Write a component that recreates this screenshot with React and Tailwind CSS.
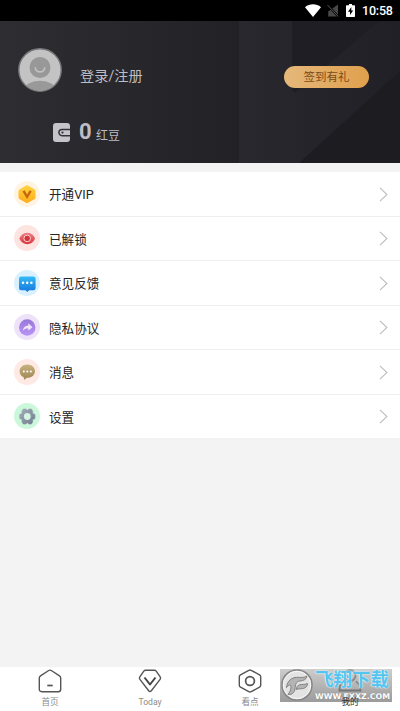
import React from "react";

const VipIcon = () => (
  <svg className="w-[26px] h-[26px]" viewBox="0 0 26 26">
    <defs>
      <linearGradient id="vip" x1="0" y1="0" x2="0" y2="1">
        <stop offset="0" stopColor="#ffd23f" />
        <stop offset="1" stopColor="#ffae1b" />
      </linearGradient>
    </defs>
    <circle cx="13" cy="13" r="13" fill="#fff4e3" />
    <path
      d="M13 5.200l6.800 3.800q.7.4.7 1.200v6q0 .8-.7 1.200L13 21.200l-6.800-3.800q-.7-.4-.7-1.200v-6q0-.8.7-1.200z"
      fill="url(#vip)"
      stroke="url(#vip)"
      strokeWidth="2"
      strokeLinejoin="round"
    />
    <path
      d="M9.500 9.800l3.600 6 3.600-6"
      fill="none"
      stroke="#c5660f"
      strokeWidth="2.300"
    />
  </svg>
);

const EyeIcon = () => (
  <svg className="w-[26px] h-[26px]" viewBox="0 0 26 26">
    <defs>
      <linearGradient id="eye" x1="0" y1="0" x2="0" y2="1">
        <stop offset="0" stopColor="#ee7f84" />
        <stop offset="1" stopColor="#d9343c" />
      </linearGradient>
    </defs>
    <circle cx="13" cy="13" r="13" fill="#fde4e0" />
    <path
      d="M5.300 13.600C7 9.700 10 7.800 13.300 7.800s6.200 1.900 7.800 5.800c-1.600 3.800-4.500 5.600-7.800 5.600s-6.400-1.800-8-5.600z"
      fill="url(#eye)"
    />
    <circle cx="13.200" cy="13.400" r="3.300" fill="#d4343b" stroke="#f9d3d1" strokeWidth="1" />
  </svg>
);

const FeedbackIcon = () => (
  <svg className="w-[26px] h-[26px]" viewBox="0 0 26 26">
    <defs>
      <linearGradient id="feedback" x1="0" y1="0" x2="0" y2="1">
        <stop offset="0" stopColor="#35baf5" />
        <stop offset="1" stopColor="#1677e0" />
      </linearGradient>
    </defs>
    <circle cx="13" cy="13" r="13" fill="#d9f1ff" />
    <path
      d="M7.200 6.500h12.200q2.200 0 2.200 2.200v9.300q0 2.200-2.200 2.200h-4.200l-1.900 1.700-1.900-1.700H7.200Q5 20.200 5 18V8.700q0-2.200 2.200-2.200z"
      fill="url(#feedback)"
    />
    <circle cx="9" cy="12.800" r="1.250" fill="#fff" />
    <circle cx="13.200" cy="12.800" r="1.250" fill="#fff" />
    <circle cx="17.400" cy="12.800" r="1.250" fill="#fff" />
  </svg>
);

const ShareIcon = () => (
  <svg className="w-[26px] h-[26px]" viewBox="0 0 26 26">
    <defs>
      <linearGradient id="share" x1="0" y1="0" x2="0" y2="1">
        <stop offset="0" stopColor="#9876d8" />
        <stop offset="1" stopColor="#b894f5" />
      </linearGradient>
    </defs>
    <circle cx="13" cy="13" r="13" fill="#eee2f9" />
    <circle cx="13.200" cy="13.500" r="8.200" fill="url(#share)" />
    <path
      d="M14.300 9.300l4.200 3.900-4.200 3.600v-2.200c-2.500-.1-3.900.4-5.500 2.200.4-3.200 2.100-5 5.500-5.300z"
      fill="#f0e4fc"
    />
  </svg>
);

const MessageIcon = () => (
  <svg className="w-[26px] h-[26px]" viewBox="0 0 26 26">
    <defs>
      <linearGradient id="message" x1="0" y1="0" x2="0" y2="1">
        <stop offset="0" stopColor="#c9b27f" />
        <stop offset="1" stopColor="#9d8555" />
      </linearGradient>
    </defs>
    <circle cx="13" cy="13" r="13" fill="#ffe9e5" />
    <path
      d="M13.300 5.600c4.300 0 7.700 2.900 7.700 6.600s-3.400 6.600-7.500 6.600c-1 .1-2 1.500-3.600 1.900.2-1 .1-1.900-.4-2.600-2.400-1.100-3.900-3.300-3.900-5.900 0-3.700 3.400-6.600 7.700-6.600z"
      fill="url(#message)"
    />
    <circle cx="9.800" cy="12.500" r="1.050" fill="#fff" />
    <circle cx="13.300" cy="12.500" r="1.050" fill="#fff" />
    <circle cx="16.800" cy="12.500" r="1.050" fill="#fff" />
  </svg>
);

const SettingsIcon = () => (
  <svg className="w-[26px] h-[26px]" viewBox="0 0 26 26">
    <defs>
      <linearGradient id="gear" x1="0" y1="0" x2="1" y2="1">
        <stop offset="0" stopColor="#a3adba" />
        <stop offset="1" stopColor="#717c8e" />
      </linearGradient>
    </defs>
    <circle cx="13" cy="13" r="13" fill="#cbf8da" />
    <path
      d="M9.200 6h2.500l1.600 1.300L14.900 6h2.500l1.300 2.300-.2 2.100 2.400 1v4.200l-2.400 1 .2 2.100-1.300 2.300h-2.500l-1.600-1.300L11.700 21H9.200l-1.300-2.300.2-2.100-2.400-1v-4.200l2.400-1-.2-2.100z"
      fill="url(#gear)"
      stroke="url(#gear)"
      strokeWidth=".6"
      strokeLinejoin="round"
    />
    <circle cx="13.300" cy="13.500" r="3.400" fill="#d5f5e3" />
  </svg>
);

const menuItems = [
  { label: "开通VIP", icon: VipIcon },
  { label: "已解锁", icon: EyeIcon },
  { label: "意见反馈", icon: FeedbackIcon },
  { label: "隐私协议", icon: ShareIcon },
  { label: "消息", icon: MessageIcon },
  { label: "设置", icon: SettingsIcon },
];

const StatusBar = () => (
  <div className="h-[21px] bg-black flex items-center justify-end pr-[7px] text-white">
    <svg className="w-4 h-[13px]" viewBox="0 0 16 13">
      <path d="M0 3.200C4.600-.6 11.400-.6 16 3.200L8 13z" fill="#fff" />
    </svg>
    <svg className="ml-[6px] w-3 h-[13px]" viewBox="0 0 12 13">
      <path d="M11 .5v12H1.200V7.500z" fill="#484848" />
      <path d="M.5 1l10.800 11.500" stroke="#000" strokeWidth="2.200" />
      <path d="M.5 1l10.800 11.500" stroke="#585858" strokeWidth="1" />
    </svg>
    <svg className="ml-[7px] w-[9px] h-[13px]" viewBox="0 0 9 13">
      <path d="M3 0h3v1.300h2.300q.7 0 .7.700v10.300q0 .7-.7.700H.7q-.7 0-.7-.7V2q0-.7.700-.7H3z" fill="#fff" />
      <path d="M5.300 3L2 7.700h2V11l3.200-4.600H5.300z" fill="#000" />
    </svg>
    <span className="ml-[7px] w-[31px] text-[12.500px] leading-[21px] font-medium tracking-[-0.2px] whitespace-nowrap">
      10:58
    </span>
  </div>
);

const Header = () => (
  <div className="relative h-[142px] bg-[#28272c]">
    <svg className="absolute inset-0 w-full h-full" viewBox="0 0 400 142" preserveAspectRatio="none">
      <defs>
        <linearGradient id="panel" x1="0" y1="0" x2="1" y2="0">
          <stop offset="0" stopColor="#2e2d32" />
          <stop offset="1" stopColor="#222126" />
        </linearGradient>
        <linearGradient id="fold" x1="0" y1="0" x2="1" y2="0">
          <stop offset="0" stopColor="#29282e" />
          <stop offset="1" stopColor="#212026" />
        </linearGradient>
      </defs>
      <rect width="240" height="142" fill="url(#panel)" />
      <rect x="239" width="161" height="142" fill="url(#fold)" />
      <path d="M292 0h87L295 72l-3-3z" fill="#1f1e24" />
      <path d="M400 50v92H299z" fill="#1d1c21" />
    </svg>

    <div className="relative flex items-start">
      <svg className="ml-[18px] mt-[27px] w-11 h-11" viewBox="0 0 44 44">
        <defs>
          <clipPath id="avatar">
            <circle cx="22" cy="22" r="20.500" />
          </clipPath>
        </defs>
        <circle cx="22" cy="22" r="21.200" fill="#c3c3c3" stroke="#77777a" strokeWidth="1.400" />
        <ellipse cx="22" cy="42" rx="16" ry="9.300" fill="#999" clipPath="url(#avatar)" />
        <circle cx="22" cy="19.500" r="10.500" fill="#989898" />
        <path d="M17.300 19.800c.8 5.400 8.600 5.400 9.400 0" fill="none" stroke="#c3c3c3" strokeWidth="1.500" strokeLinecap="round" />
      </svg>
      <span className="ml-[18px] mt-[45px] text-[14.200px] leading-5 text-[#bebdc4]">登录/注册</span>
      <button className="ml-auto mr-[31px] mt-[45px] w-[85px] h-[22px] rounded-full bg-gradient-to-r from-[#e5b87a] to-[#e0a04c] text-[11.500px] leading-[23px] text-[#7b4b16]">
        签到有礼
      </button>
    </div>

    <div className="relative flex items-center h-6 mt-7 ml-[53px] text-[#bebdc4]">
      <svg className="w-[17px] h-[19px]" viewBox="0 0 17 19">
        <path d="M3 0h11q3 0 3 3v13q0 3-3 3H3q-3 0-3-3V3q0-3 3-3z" fill="#c5c4cb" />
        <path d="M17 6.500H9a3.100 3.100 0 000 6.200h8" fill="#c5c4cb" stroke="#333238" strokeWidth="1.500" />
        <circle cx="9.500" cy="9.600" r="1.100" fill="#333238" />
      </svg>
      <span className="ml-[9px] w-[13px] text-[22px] leading-6 font-bold">0</span>
      <span className="ml-[4px] mt-[8px] text-[12px] leading-[18px]">红豆</span>
    </div>
  </div>
);

const MenuRow = ({ item }) => {
  const Icon = item.icon;
  return (
    <div className="flex-1 flex items-center pl-[14px] pr-3 border-b border-[#efefef] last:border-b-0">
      <Icon />
      <span className="ml-[9px] pt-[3px] text-[12.600px] leading-5 text-[#262626]">{item.label}</span>
      <svg className="ml-auto mt-px w-[9px] h-[15px]" viewBox="0 0 9 15">
        <path d="M1 .8l6.900 6.700L1 14.200" fill="none" stroke="#bdbdbd" strokeWidth="1.100" />
      </svg>
    </div>
  );
};

const HomeIcon = () => (
  <svg className="w-6 h-6" viewBox="0 0 24 24" fill="none" stroke="#555" strokeWidth="1.400" strokeLinejoin="round">
    <path d="M10.700 1.500q1.300-.8 2.600 0l8.200 5.300q1.200.8 1.200 2.200v11.200q0 2.500-2.500 2.500H3.800q-2.500 0-2.500-2.500V9q0-1.400 1.200-2.200z" />
    <path d="M9.300 16.500h5.400" strokeWidth="1.700" />
  </svg>
);

const TodayIcon = () => (
  <svg className="w-6 h-6" viewBox="0 0 24 24" fill="none" stroke="#555" strokeWidth="1.400" strokeLinejoin="round">
    <path d="M7.500 1.200h9q1 0 1.700.9l4 5.700q.9 1.300-.1 2.600L13.300 21.700q-1.300 1.600-2.600 0L1.900 10.400q-1-1.300-.1-2.600l4-5.700q.7-.9 1.700-.9z" />
    <path d="M6.500 8.500l5.500 7 5.500-7" stroke="#444" strokeWidth="2" />
  </svg>
);

const WatchIcon = () => (
  <svg className="w-6 h-6" viewBox="0 0 24 24" fill="none" stroke="#555" strokeWidth="1.400" strokeLinejoin="round">
    <path d="M10.800 1.300q1.200-.7 2.400 0l8.300 4.500q1.200.7 1.200 2v8.400q0 1.300-1.200 2l-8.300 4.500q-1.200.7-2.400 0l-8.300-4.500q-1.200-.7-1.200-2V7.800q0-1.300 1.200-2z" />
    <circle cx="12" cy="12" r="4.400" strokeWidth="1.700" />
  </svg>
);

const MineIcon = () => (
  <svg className="w-6 h-6" viewBox="0 0 24 24" fill="none" stroke="#20242e" strokeWidth="1.800">
    <circle cx="12" cy="6.500" r="5.500" />
    <path d="M6 12.500Q1.500 15 1.500 21.500h21Q22.500 15 18 12.500" />
  </svg>
);

const tabs = [
  { label: "首页", icon: HomeIcon },
  { label: "Today", icon: TodayIcon },
  { label: "看点", icon: WatchIcon },
  { label: "我的", icon: MineIcon, active: true },
];

const Watermark = () => (
  <div className="absolute left-[280px] top-[2px] w-28 h-[33px] flex items-start bg-gradient-to-b from-[#bdbdbd]/75 to-[#7a7a7a]/75">
    <svg className="ml-px w-8 h-8 shrink-0" viewBox="0 0 32 32">
      <circle cx="16" cy="16" r="15" fill="#e3e3e3" stroke="#858585" strokeWidth="1.500" />
      <circle cx="16" cy="16" r="13.700" fill="none" stroke="#f8f8f8" strokeWidth="1" />
      <path
        d="M26 7c-4 2.500-8 .8-12 1.500C8.500 9.500 6 14 5.500 18.500c3-3.500 4.500-3 4.500-.5 0 3-1.500 5.500-3 7.500 4 .5 6.500-2 7-5.500.4-4.500 1-7.500 5-8 3.500-.3 6.500-1.500 7-5z"
        fill="#b4b4b4"
        stroke="#7b7b7b"
        strokeWidth=".9"
      />
      <path
        d="M26.500 14.500c-3 1.500-5.500.5-8 1.300-2.200.7-3 2.500-3.200 4.700 2.500-1.200 4.500-.4 7-1 2.700-.7 4.200-2.500 4.200-5z"
        fill="#b4b4b4"
        stroke="#7b7b7b"
        strokeWidth=".9"
      />
    </svg>
    <div className="ml-[2px] flex flex-col whitespace-nowrap">
      <span className="text-[18.500px] leading-[23px] h-[23px] font-bold text-[#54c5f0] [text-shadow:0_0_1px_#fff,0_0_2px_#e8f8ff]">
        飞翔下载
      </span>
      <span className="h-[9px] text-[7.900px] leading-[9px] font-bold text-white font-['DejaVu_Sans',sans-serif] [text-shadow:0_0_1px_#777]">
        WWW.FXXZ.COM
      </span>
    </div>
  </div>
);

const TabBar = () => (
  <div className="relative h-11 bg-white grid grid-cols-4">
    {tabs.map((tab) => {
      const Icon = tab.icon;
      return (
        <div key={tab.label} className="flex flex-col items-center pt-[2px]">
          <Icon />
          <span
            className={`mt-[3px] text-[8.600px] leading-3 ${
              tab.active ? "relative z-10 text-[#333]" : "text-[#8a8a8a]"
            }`}
          >
            {tab.label}
          </span>
        </div>
      );
    })}
    <Watermark />
  </div>
);

export default function App() {
  return (
    <div className="w-[400px] h-[711px] flex flex-col overflow-hidden bg-[#f3f3f3] font-['Roboto','Noto_Sans_CJK_SC',sans-serif]">
      <StatusBar />
      <Header />
      <div className="mt-[9px] h-[266px] flex flex-col bg-white">
        {menuItems.map((item) => (
          <MenuRow key={item.label} item={item} />
        ))}
      </div>
      <div className="flex-1" />
      <TabBar />
    </div>
  );
}
